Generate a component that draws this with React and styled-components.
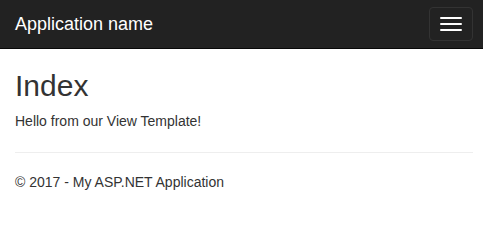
import React from 'react';
import styled, { createGlobalStyle } from 'styled-components';

const GlobalStyle = createGlobalStyle`
  * { box-sizing: border-box; }
  html, body {
    margin: 0;
    padding: 0;
    background: #fff;
  }
  body {
    font-family: 'Liberation Sans', Arial, sans-serif;
    font-size: 14px;
    line-height: 1.42857;
    color: #333;
  }
`;

// --- NAVBAR ---
const Navbar = styled.nav`
  height: 49px;
  background-color: #222;
  border-bottom: 1px solid #080808;
  display: flex;
  align-items: flex-start;
  justify-content: space-between;
`;

const Brand = styled.a`
  display: block;
  padding: 14px 15px;
  font-size: 18px;
  line-height: 20px;
  color: #fff;
  text-decoration: none;
`;

const Toggle = styled.button`
  margin: 7px 10px 0 0;
  width: 44px;
  height: 34px;
  padding: 9px 10px;
  background: transparent;
  border: 1px solid #333;
  border-radius: 4px;
  display: flex;
  flex-direction: column;
  gap: 4px;
  cursor: pointer;
`;

const IconBar = styled.span`
  display: block;
  width: 22px;
  height: 2px;
  border-radius: 1px;
  background-color: #fff;
`;

// --- BODY ---
const Container = styled.div`
  padding: 0 10px 0 15px;
`;

const Title = styled.h2`
  margin: 20px 0 10px;
  font-size: 30px;
  font-weight: 500;
  line-height: 1.1;
  color: #333;
`;

const Text = styled.p`
  margin: 0 0 10px;
`;

const Rule = styled.hr`
  margin: 20px 0;
  border: 0;
  border-top: 1px solid #eee;
`;

const Footer = styled.footer`
  p { margin: 0 0 10px; }
`;

export default function App() {
  return (
    <>
      <GlobalStyle />
      <Navbar>
        <Brand href="#">Application name</Brand>
        <Toggle type="button" aria-label="Toggle navigation">
          <IconBar />
          <IconBar />
          <IconBar />
        </Toggle>
      </Navbar>
      <Container>
        <Title>Index</Title>
        <Text>Hello from our View Template!</Text>
        <Rule />
        <Footer>
          <p>© 2017 - My ASP.NET Application</p>
        </Footer>
      </Container>
    </>
  );
}
